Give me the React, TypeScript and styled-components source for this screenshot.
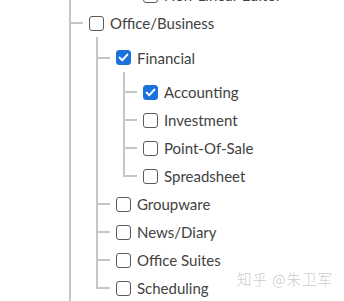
import React from "react";
import styled, { createGlobalStyle } from "styled-components";

type Item = { label: string; checked?: boolean; children?: Item[] };

const GlobalStyle = createGlobalStyle`
  html, body { margin: 0; padding: 0; background: #ffffff; }
  body { overflow: hidden; font-family: Lato, "Noto Sans", sans-serif; }
`;

const Viewport = styled.div`
  position: relative;
  width: 344px;
  height: 301px;
  overflow: hidden;
  background: #ffffff;
`;

const Tree = styled.div`
  margin-top: -19px;
  padding-left: 69px;
`;

const List = styled.ul<{ $continues?: boolean; $nested?: boolean }>`
  position: relative;
  list-style: none;
  margin: 0 0 0 ${(p) => (p.$nested ? "7px" : "0")};
  padding: ${(p) => (p.$nested ? "6.5px" : "0")} 0 0 0;
  &::before {
    content: "";
    position: absolute;
    left: 0;
    top: 0;
    bottom: ${(p) => (p.$continues ? "-400px" : "13px")};
    width: 2px;
    background: #c6c6c6;
  }
`;

const Node = styled.li`
  position: relative;
  padding-left: 20px;
  &::before {
    content: "";
    position: absolute;
    left: 0;
    top: 13px;
    width: 14px;
    height: 2px;
    background: #c6c6c6;
  }
`;

const TopNode = styled(Node)`
  margin-left: 54px;
  &::before {
    display: none;
  }
`;

const Row = styled.div`
  display: flex;
  align-items: center;
  gap: 6px;
  height: 28px;
`;

const Box = styled.span<{ $checked?: boolean }>`
  box-sizing: border-box;
  width: 15px;
  height: 15px;
  flex: none;
  border-radius: 3px;
  border: 1.5px solid ${(p) => (p.$checked ? "#1b72dc" : "#5a5a5a")};
  background: ${(p) => (p.$checked ? "#1b72dc" : "#ffffff")};
  display: flex;
  align-items: center;
  justify-content: center;
`;

const Label = styled.span`
  font-family: Lato, "Noto Sans", sans-serif;
  font-size: 15px;
  color: #424242;
  white-space: nowrap;
`;

const Watermark = styled.div`
  position: absolute;
  right: 11px;
  bottom: 12px;
  font-family: "Noto Sans CJK SC", "Noto Sans", sans-serif;
  font-size: 14.5px;
  font-weight: 300;
  color: #cccccc;
  letter-spacing: 1px;
  white-space: nowrap;
`;

const Check = () => (
  <svg width="11" height="11" viewBox="0 0 11 11" aria-hidden>
    <path
      d="M1.6 5.6 L4.3 8.2 L9.4 2.6"
      fill="none"
      stroke="#ffffff"
      strokeWidth="2"
      strokeLinecap="round"
      strokeLinejoin="round"
    />
  </svg>
);

const Checkbox = ({ checked }: { checked?: boolean }) => (
  <Box $checked={checked}>{checked ? <Check /> : null}</Box>
);

const TreeRow = ({ item }: { item: Item }) => (
  <Row>
    <Checkbox checked={item.checked} />
    <Label>{item.label}</Label>
  </Row>
);

const TreeNode = ({ item }: { item: Item }) => (
  <Node>
    <TreeRow item={item} />
    {item.children && (
      <List $nested>
        {item.children.map((c) => (
          <TreeNode key={c.label} item={c} />
        ))}
      </List>
    )}
  </Node>
);

const office: Item = {
  label: "Office/Business",
  children: [
    {
      label: "Financial",
      checked: true,
      children: [
        { label: "Accounting", checked: true },
        { label: "Investment" },
        { label: "Point-Of-Sale" },
        { label: "Spreadsheet" },
      ],
    },
    { label: "Groupware" },
    { label: "News/Diary" },
    { label: "Office Suites" },
    { label: "Scheduling" },
  ],
};

export default function App() {
  return (
    <>
      <GlobalStyle />
      <Viewport>
        <Tree>
          <List $continues>
            <TopNode>
              <TreeRow item={{ label: "Non-Linear Editor" }} />
            </TopNode>
            <TreeNode item={office} />
          </List>
        </Tree>
        <Watermark>知乎 @朱卫军</Watermark>
      </Viewport>
    </>
  );
}
